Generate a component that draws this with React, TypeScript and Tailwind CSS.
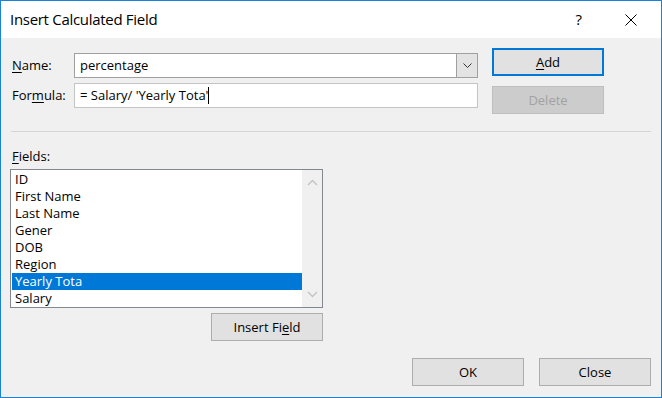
import React from 'react';

const fields = ['ID', 'First Name', 'Last Name', 'Gener', 'DOB', 'Region', 'Yearly Tota', 'Salary'];

const Chevron = ({ up }: { up?: boolean }) => (
  <svg width="11" height="7" viewBox="0 0 11 7" className="block">
    <path
      d={up ? 'M1 6 L5.5 1.5 L10 6' : 'M1 1 L5.5 5.5 L10 1'}
      fill="none"
      stroke="#c2c2c2"
      strokeWidth="1.3"
    />
  </svg>
);

type Variant = 'normal' | 'default' | 'disabled';

const variantClass: Record<Variant, string> = {
  normal: 'bg-[#e1e1e1] border border-[#adadad] text-black',
  default: 'bg-[#e1e1e1] border-2 border-[#0078d7] text-black',
  disabled: 'bg-[#cccccc] border border-[#bfbfbf] text-[#a2a2a2]',
};

const Button = ({
  children,
  variant = 'normal',
}: {
  children: React.ReactNode;
  variant?: Variant;
}) => (
  <div
    className={
      'w-[112px] h-[28px] flex items-center justify-center ' + variantClass[variant]
    }
  >
    {children}
  </div>
);

export default function App() {
  const selected = 'Yearly Tota';

  return (
    <div className="w-[662px] h-[398px] border border-[#1883d7] bg-[#f0f0f0] flex flex-col font-['Segoe_UI','Open_Sans',sans-serif] text-[13px] text-black leading-[17px] overflow-hidden">
      {/* Title bar */}
      <div className="h-[37px] bg-white flex items-center shrink-0">
        <span className="ml-[9px] text-[15px] tracking-[-0.3px]">Insert Calculated Field</span>
        <span className="ml-auto text-[15px] mr-[43px]">?</span>
        <svg width="12" height="12" viewBox="0 0 12 12" className="mr-[24px]">
          <path d="M0.5 0.5 L11.5 11.5 M11.5 0.5 L0.5 11.5" stroke="#000" strokeWidth="1" />
        </svg>
      </div>

      <div className="flex flex-col pl-[9px] pr-[9px]">
        {/* Name / formula + buttons */}
        <div className="flex items-start">
          <div className="mt-[15px] flex flex-col gap-[5px]">
            <div className="flex items-center">
              <span className="w-[64px] pl-[2px]">
                <span className="underline underline-offset-2">N</span>ame:
              </span>
              <div className="w-[404px] h-[25px] flex border border-[#a0a0a0] bg-white">
                <span className="flex-1 pl-[5px] flex items-center">percentage</span>
                <div className="w-[21px] h-full bg-[#e3e3e3] border-l border-[#a0a0a0] flex items-center justify-center">
                  <svg width="9" height="5" viewBox="0 0 9 5">
                    <path d="M0.5 0.5 L4.5 4.5 L8.5 0.5" fill="none" stroke="#333" strokeWidth="1" />
                  </svg>
                </div>
              </div>
            </div>
            <div className="flex items-center">
              <span className="w-[64px] pl-[2px]">
                For<span className="underline underline-offset-2">m</span>ula:
              </span>
              <div className="w-[404px] h-[25px] flex items-center border border-[#c4c4c4] bg-white pl-[5px]">
                <span>= Salary/ 'Yearly Tota'</span>
                <span className="w-px h-[17px] bg-black" />
              </div>
            </div>
          </div>

          <div className="ml-[14px] mt-[10px] flex flex-col gap-[10px]">
            <Button variant="default">
              <span>
                <span className="underline underline-offset-2">A</span>dd
              </span>
            </Button>
            <Button variant="disabled">Delete</Button>
          </div>
        </div>

        {/* Separator */}
        <div className="mt-[17px] h-px bg-[#d5d5d5] mx-px" />

        {/* Fields */}
        <div className="mt-[16px] pl-[2px] h-[17px]">
          <span className="underline underline-offset-2">F</span>ields:
        </div>
        <div className="mt-[4px] w-[313px] h-[139px] border border-[#828790] bg-white flex">
          <div className="w-[291px] pl-px pt-px flex flex-col">
            {fields.map((f) => (
              <div
                key={f}
                className={
                  'h-[17px] pl-[3px] flex items-center ' +
                  (f === selected ? 'bg-[#0078d7] text-white' : '')
                }
              >
                {f}
              </div>
            ))}
          </div>
          <div className="w-[20px] bg-[#f0f0f0] flex flex-col items-center justify-between py-[9px]">
            <Chevron up />
            <Chevron />
          </div>
        </div>
        <div className="w-[313px] flex justify-end mt-[5px]">
          <Button>
            <span>
              Insert Fi<span className="underline underline-offset-2">e</span>ld
            </span>
          </Button>
        </div>

        {/* Footer buttons */}
        <div className="mt-[17px] flex justify-end gap-[15px] pr-px">
          <Button>OK</Button>
          <Button>Close</Button>
        </div>
      </div>
    </div>
  );
}
